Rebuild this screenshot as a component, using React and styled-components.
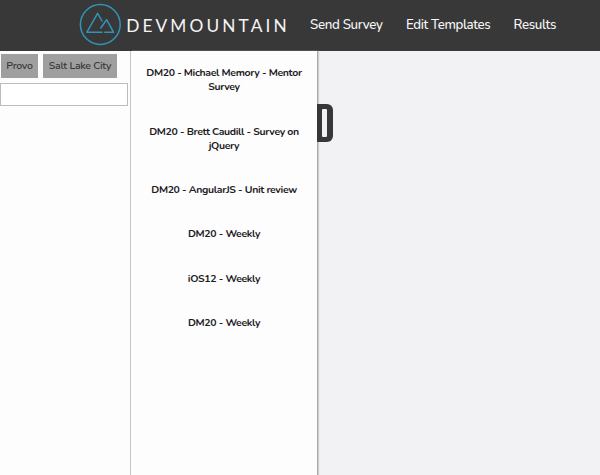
import React from "react";
import styled, { createGlobalStyle } from "styled-components";

const GlobalStyle = createGlobalStyle`
  * { box-sizing: border-box; }
  body {
    margin: 0;
    overflow: hidden;
    background: #f2f1f3;
    font-family: "Nunito", "Noto Sans", "Open Sans", sans-serif;
  }
`;

const Page = styled.div`
  display: flex;
  flex-direction: column;
  height: 475px;
`;

const Header = styled.header`
  display: flex;
  flex: none;
  height: 51px;
  padding-left: 79px;
  background: #393839;
`;

const Logo = styled.svg`
  flex: none;
  width: 212px;
  height: 51px;
`;

const Nav = styled.nav`
  display: flex;
  padding: 15px 0 0 19px;
`;

const NavLink = styled.a`
  flex: none;
  width: ${(p) => p.$width}px;
  color: #f8f8f8;
  font-size: 13.3px;
  font-weight: 500;
  line-height: 20px;
  letter-spacing: ${(p) => p.$spacing}px;
  white-space: nowrap;
`;

const Main = styled.main`
  display: flex;
  flex: 1;
  min-height: 0;
`;

const Sidebar = styled.aside`
  flex: none;
  width: 131px;
  padding-top: 3px;
  background: #fefdfe;
  border-right: 1px solid #c3c4c8;
`;

const Campuses = styled.div`
  display: flex;
  gap: 5px;
  padding-left: 1px;
`;

const CampusButton = styled.button`
  width: ${(p) => p.$width}px;
  height: 24px;
  padding: 0 0 1px;
  border: 0;
  background: #a09fa0;
  color: #39383a;
  font: 600 10.5px/22px "Nunito", "Noto Sans", sans-serif;
  letter-spacing: -0.27px;
  white-space: nowrap;
`;

const Search = styled.input`
  display: block;
  width: 128px;
  height: 23px;
  margin: 5px 0 0;
  padding: 0 4px;
  border: 1px solid #b9bdbf;
  background: #fff;
`;

const SurveyPanel = styled.section`
  flex: none;
  width: 187px;
  background: #fefdfe;
  border-right: 1px solid #a9a9ad;
  box-shadow: 1px 0 1px #cfced1;
`;

const Survey = styled.div`
  padding: 15.15px 12px;
  color: #1c1b1d;
  font-size: 10.5px;
  font-weight: 700;
  line-height: 14.1px;
  letter-spacing: -0.35px;
  text-align: center;
`;

const Tab = styled.div`
  position: relative;
  width: 16px;
  height: 38px;
  margin: 53px 0 0 -1px;
  padding: 5px;
  border-radius: 0 6px 6px 0;
  background: #373638;
`;

const TabSlot = styled.div`
  width: 5px;
  height: 28px;
  border-radius: 1px;
  background: #f2f1f3;
`;

const surveys = [
  "DM20 - Michael Memory - Mentor Survey",
  "DM20 - Brett Caudill - Survey on jQuery",
  "DM20 - AngularJS - Unit review",
  "DM20 - Weekly",
  "iOS12 - Weekly",
  "DM20 - Weekly",
];

export default function App() {
  return (
    <Page>
      <GlobalStyle />
      <Header>
        <Logo viewBox="0 0 212 51">
          <g fill="none" stroke="#3093b8" strokeWidth="1.5" strokeLinejoin="round" strokeLinecap="round">
            <circle cx="21.3" cy="24.5" r="19.9" />
            <path d="M23 32.3H7.8L18.6 13.3L23 21" />
            <path d="M21.8 28L27.6 19.7L34.6 32.3H25.8" />
          </g>
          <text x="47.2" y="31.6" fill="#f5f5f5" fontFamily="Lato, sans-serif" fontSize="17.3" textLength="160.5">
            DEVMOUNTAIN
          </text>
        </Logo>
        <Nav>
          <NavLink $width={96} $spacing={-0.3}>Send Survey</NavLink>
          <NavLink $width={107.5} $spacing={-0.38}>Edit Templates</NavLink>
          <NavLink $width={60} $spacing={-0.33}>Results</NavLink>
        </Nav>
      </Header>
      <Main>
        <Sidebar>
          <Campuses>
            <CampusButton $width={37}>Provo</CampusButton>
            <CampusButton $width={74}>Salt Lake City</CampusButton>
          </Campuses>
          <Search aria-label="Search" />
        </Sidebar>
        <SurveyPanel>
          {surveys.map((name, i) => (
            <Survey key={i}>{name}</Survey>
          ))}
        </SurveyPanel>
        <Tab><TabSlot /></Tab>
      </Main>
    </Page>
  );
}
